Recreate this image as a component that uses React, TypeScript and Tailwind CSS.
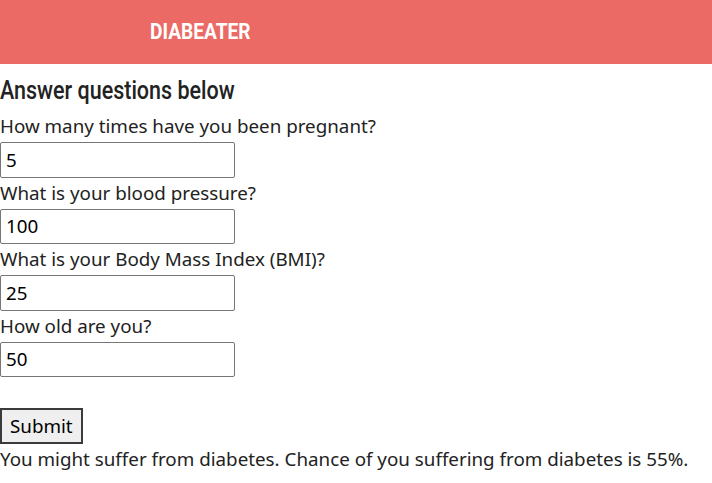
const questions = [
  { label: "How many times have you been pregnant?", value: "5" },
  { label: "What is your blood pressure?", value: "100" },
  { label: "What is your Body Mass Index (BMI)?", value: "25" },
  { label: "How old are you?", value: "50" },
];

const App = () => {
  return (
    <div className="min-h-screen bg-white text-[#222] font-['Noto_Sans',sans-serif]">
      <header className="h-16 bg-[#ec6a65] flex items-center pl-[150px]">
        <h1 className="inline-block origin-left scale-x-[0.85] text-white text-[22.5px] font-bold font-['Roboto',sans-serif]">
          DIABEATER
        </h1>
      </header>

      <main>
        <h2 className="mt-[12px] mb-[5px] origin-left scale-x-[0.86] text-[25px] leading-[30px] font-medium font-['Roboto',sans-serif] text-[#222]">
          Answer questions below
        </h2>

        <form onSubmit={(e) => e.preventDefault()}>
          {questions.map((q) => (
            <div key={q.label}>
              <label className="block text-[18.8px] leading-[31px]">{q.label}</label>
              <input
                type="text"
                defaultValue={q.value}
                className="block w-[235px] h-[35.5px] border border-[#767676] rounded-[2px] px-[5px] text-[18.8px] text-black"
              />
            </div>
          ))}

          <div className="h-[31px]" />
          <button
            type="submit"
            className="h-[36px] px-[8px] border-2 border-[#3b3b3b] bg-[#efefef] text-[18.8px] text-black"
          >
            Submit
          </button>
        </form>

        <p className="text-[18.8px] leading-[31px]">
          You might suffer from diabetes. Chance of you suffering from diabetes is 55%.
        </p>
      </main>
    </div>
  );
};

export default App;
